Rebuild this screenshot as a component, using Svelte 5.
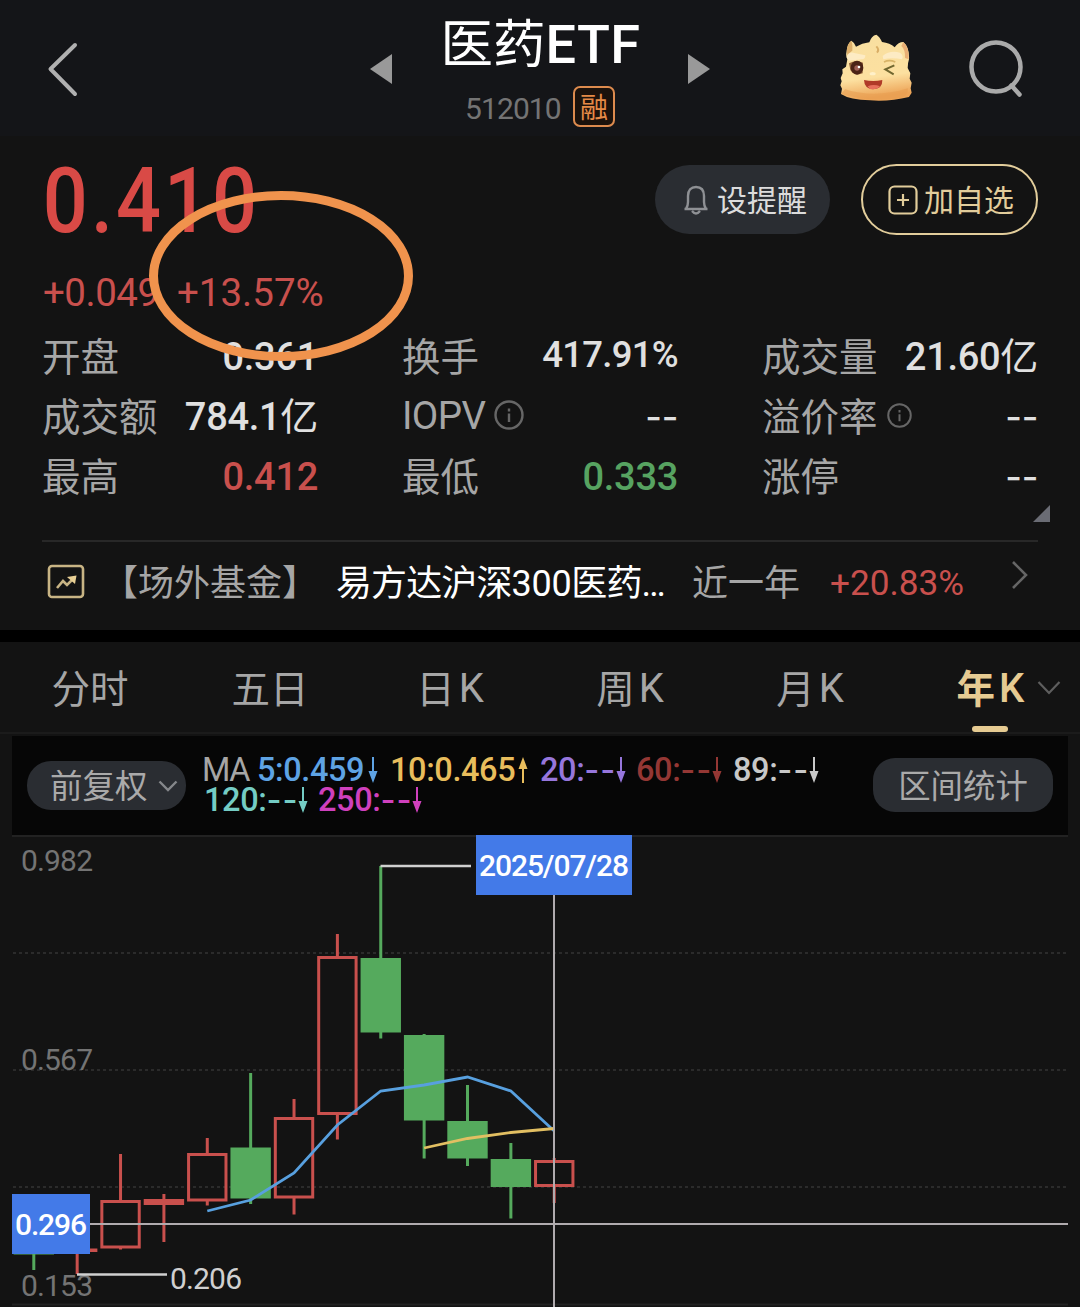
<script lang="ts">
  type Stat = { label: string; value: string; unit?: string; tone?: string; info?: number; percent?: boolean };

  const stats: Stat[] = [
    { label: '开盘', value: '0.361' },
    { label: '换手', value: '417.91%', percent: true },
    { label: '成交量', value: '21.60', unit: '亿' },
    { label: '成交额', value: '784.1', unit: '亿' },
    { label: 'IOPV', value: '--', info: 30 },
    { label: '溢价率', value: '--', info: 25 },
    { label: '最高', value: '0.412', tone: 'up' },
    { label: '最低', value: '0.333', tone: 'down' },
    { label: '涨停', value: '--' },
  ];

  const tabs = [
    { cn: '分时' },
    { cn: '五日' },
    { cn: '日', k: true },
    { cn: '周', k: true },
    { cn: '月', k: true },
    { cn: '年', k: true, active: true },
  ];

  // moving average legend, one list per line
  const averages = [
    [
      { n: '5:', v: '0.459', color: '#5ea3e4', width: 121 },
      { n: '10:', v: '0.465', color: '#e8bd5c', width: 138, rising: true },
      { n: '20:', v: '--', color: '#9676dc', width: 84 },
      { n: '60:', v: '--', color: '#943734', width: 85 },
      { n: '89:', v: '--', color: '#c8c8c8', width: 84 },
    ],
    [
      { n: '120:', v: '--', color: '#74ccc4', width: 102 },
      { n: '250:', v: '--', color: '#cf40bd', width: 103 },
    ],
  ];

  // high, body top, body bottom, low
  const candles = [
    { up: false, y: [1230, 1230, 1254.5, 1270] },
    { up: true, y: [1240, 1248.5, 1252, 1274] },
    { up: true, y: [1154, 1200, 1248.5, 1249.5] },
    { up: true, y: [1194, 1199, 1205, 1242] },
    { up: true, y: [1138, 1153, 1201.5, 1205.5] },
    { up: false, y: [1073, 1147.5, 1198.5, 1204] },
    { up: true, y: [1099, 1117, 1198.5, 1214.5] },
    { up: true, y: [934, 956, 1115, 1139.5] },
    { up: false, y: [866, 958, 1032.5, 1038.5] },
    { up: false, y: [1034, 1035, 1120.5, 1158.5] },
    { up: false, y: [1085, 1121, 1158.5, 1166] },
    { up: false, y: [1143, 1159, 1187, 1218.5] },
    { up: true, y: [1158, 1160, 1187, 1203] },
  ];
  const cx = (i: number) => 33.8 + i * 43.37;
  const line = (start: number, ys: number[]) => ys.map((y, i) => `${cx(start + i)},${y}`).join(' ');

  const ma5 = line(4, [1211, 1200, 1173, 1125, 1091, 1085, 1077, 1091, 1131]);
  const ma10 = line(9, [1148, 1138.5, 1132.5, 1128.5]);

  const axis = [
    { text: '0.982', y: 871 },
    { text: '0.567', y: 1070 },
    { text: '0.153', y: 1296 },
  ];
</script>

<div class="app">
  <header>
    <svg class="back" width="34" height="56" viewBox="0 0 34 56">
      <path d="M30 4 L5.500 28 L30 53" />
    </svg>
    <svg class="arrow" width="22" height="30" viewBox="0 0 22 30"><path d="M0 15 L22 0 V30 Z" /></svg>
    <div class="title">
      <h1>医药<span>ETF</span></h1>
      <div class="code"><span class="num">512010</span><span class="badge">融</span></div>
    </div>
    <svg class="arrow" width="22" height="30" viewBox="0 0 22 30"><path d="M22 15 L0 0 V30 Z" /></svg>
    <svg class="mascot" width="72" height="67" viewBox="0 0 216 201">
      <defs>
        <linearGradient id="face" x1="0" y1="0" x2="0.15" y2="1">
          <stop offset="0" stop-color="#f8dfa0" />
          <stop offset="0.7" stop-color="#fce0a0" />
          <stop offset="1" stop-color="#eda457" />
        </linearGradient>
      </defs>
      <path
        d="M20 52 Q22 28 34 20 Q42 24 48 38 Q66 28 88 25 Q94 5 109 2 Q119 8 126 24 Q150 27 164 40 Q175 24 190 24 Q209 40 207 76 Q203 88 203 102 L211 118 L209 134 L215 146 L212 163 L215 176 L207 189 Q150 203 90 199 Q30 198 3 180 L6 164 L1 154 L5 142 L2 132 L8 118 L7 106 L18 98 L22 76 Q16 66 20 52 Z"
        fill="url(#face)"
      />
      <path d="M20 52 Q22 28 34 20 Q38 28 37 50 Q30 52 24 70 Z" fill="#dcae69" />
      <path d="M190 24 Q208 40 206 76 L195 72 Q196 46 184 36 Z" fill="#e9af75" />
      <path d="M15 166 Q105 194 204 163 Q204 192 170 193 Q80 203 3 180 Z" fill="#e79c50" opacity=".55" />
      <path d="M20 70 Q24 50 46 58 L76 64 Q76 76 66 76 L26 80 Z" fill="#fdebc4" />
      <path d="M128 66 Q150 48 180 56 Q192 64 186 76 Q156 70 130 76 Z" fill="#fdebc4" />
      <path d="M109 37 Q119 47 111 56" stroke="#d9ae66" stroke-width="6" fill="none" />
      <path d="M27 88 Q48 76 69 86 L68 118 Q44 128 31 108 Z" fill="#8f6038" />
      <ellipse cx="51" cy="101" rx="19" ry="21" fill="#4b2316" />
      <circle cx="51" cy="102" r="8" fill="#9f5f54" />
      <circle cx="57" cy="99" r="4" fill="#fff" />
      <path d="M132 84 Q148 76 166 84" stroke="#d9b468" stroke-width="5" fill="none" />
      <path d="M163 94 L136 106 L161 121" stroke="#70662f" stroke-width="6" fill="none" />
      <ellipse cx="98" cy="119" rx="9" ry="5" fill="#fff0c8" />
      <path d="M72 138 Q100 144 127 138 Q128 165 99 166 Q73 164 72 138 Z" fill="#b03a28" />
      <path d="M83 157 Q101 149 120 157 Q110 168 90 165 Z" fill="#e7705c" />
    </svg>
    <svg class="search" width="58" height="60" viewBox="0 0 58 60">
      <circle cx="29" cy="29" r="24.500" />
      <path d="M44.500 47.500 L52.500 56.500" />
    </svg>
  </header>

  <section class="quote">
    <div class="top">
      <div class="price-box">
        <div class="price num">0.410</div>
        <div class="change num"><span>+0.049</span><span>+13.57%</span></div>
      </div>
      <button class="alert">
        <svg width="26" height="30" viewBox="0 0 26 30">
          <path d="M1.500 24 H24.500 M3 24 Q5 21 5 17 V11 C5 5 8 2 13 2 C18 2 21 5 21 11 V17 Q21 21 23 24 M9 26 Q13 31 17 26" />
        </svg>
        <span>设提醒</span>
      </button>
      <button class="add">
        <svg width="30" height="30" viewBox="0 0 30 30">
          <rect x="1.500" y="1.500" width="27" height="27" rx="5" />
          <path d="M15 9 V21 M9 15 H21" />
        </svg>
        <span>加自选</span>
      </button>
      <svg class="circle-mark" width="264" height="170" viewBox="0 0 264 170">
        <ellipse cx="132" cy="85" rx="127.500" ry="80.500" />
      </svg>
    </div>

    <div class="stats">
      {#each stats as s}
        <div class="stat">
          <span class="label" class:latin={s.label === 'IOPV'}>{s.label}</span>
          {#if s.info}
            <svg class="info" width={s.info} height={s.info} viewBox="0 0 30 30">
              <circle cx="15" cy="15" r="13.500" />
              <path d="M15 8.500 V11.500 M15 13.500 V22" />
            </svg>
          {/if}
          <span class="value num {s.tone ?? ''}" class:percent={s.percent} class:empty={s.value === '--'}>{s.value}{#if s.unit}<i>{s.unit}</i>{/if}</span>
        </div>
      {/each}
    </div>
    <svg class="corner" width="17" height="17" viewBox="0 0 17 17"><path d="M17 0 V17 H0 Z" /></svg>

    <div class="fund">
      <svg width="38" height="36" viewBox="0 0 38 36">
        <rect x="2" y="2" width="34" height="31" rx="3" />
        <path d="M10 24 L16 17 L20 21 L27 14" />
        <path class="tip" d="M20 13 L29.500 11.500 L28 20 Z" />
      </svg>
      <span class="kind">【场外基金】</span>
      <span class="name">易方达沪深<b>300</b>医药<b>…</b></span>
      <span class="period">近一年</span>
      <span class="gain num">+20.83%</span>
      <svg class="more" width="18" height="30" viewBox="0 0 18 30"><path d="M2 2 L15 15 L2 28" /></svg>
    </div>
  </section>

  <nav>
    {#each tabs as t}
      <div class="tab" class:active={t.active}>
        {t.cn}{#if t.k}<span class="k">K</span>{/if}
        {#if t.active}
          <svg class="caret" width="24" height="16" viewBox="0 0 24 16"><path d="M1.500 2 L12 13 L22.500 2" /></svg>
        {/if}
      </div>
    {/each}
  </nav>

  <div class="toolbar">
    <button class="adjust">
      <span>前复权</span>
      <svg width="20" height="12" viewBox="0 0 20 12"><path d="M1.500 1.500 L10 10 L18.500 1.500" /></svg>
    </button>
    <div class="legend num">
      {#each averages as row, r}
        <div class="row">
          {#if r === 0}<span class="ma">MA</span>{/if}
          {#each row as a}
            <span class="avg" style="color: {a.color}; width: {a.width}px">
              <span class:none={a.v === '--'}>{a.n}<em>{a.v}</em></span>
              <svg class:rising={a.rising} width="10" height="26" viewBox="0 0 10 26">
                <path d="M4 0 H6 V14 H9.500 L5 26 L0.500 14 H4 Z" />
              </svg>
            </span>
          {/each}
        </div>
      {/each}
    </div>
    <button class="range"><span>区间统计</span></button>
  </div>

  <svg class="chart" width="1080" height="472" viewBox="0 835 1080 472">
    <path class="frame" d="M12 836 H1068 M12 1304.500 H1068" />
    {#each [953, 1070, 1187] as y}
      <line class="grid" x1="13" x2="1067" y1={y} y2={y} />
    {/each}
    {#each axis as a}
      <text class="axis" x="21" y={a.y} textLength="72">{a.text}</text>
    {/each}
    {#each candles as c, i}
      <g class={c.up ? 'rise' : 'fall'}>
        <path d="M{cx(i)} {c.y[0]} V{c.y[1] + 1} M{cx(i)} {c.y[2] - 1} V{c.y[3]}" />
        {#if c.up}
          <rect x={cx(i) - 18.7} y={c.y[1] + 1.5} width="37.400" height={c.y[2] - c.y[1] - 3} />
        {:else}
          <rect x={cx(i) - 20.2} y={c.y[1]} width="40.400" height={c.y[2] - c.y[1]} />
        {/if}
      </g>
    {/each}
    <path class="rise" d="M145 1202 H183" />
    <polyline class="ma5" points={ma5} />
    <polyline class="ma10" points={ma10} />
    <path class="pointer" d="M380.500 866 H471 M77 1274.500 H167" />
    <text class="low" x="170" y="1289" textLength="72">0.206</text>
    <path class="cross" d="M554 895 V1307 M90 1224 H1068" />
    <rect class="tag" x="476" y="835" width="156" height="60" />
    <text class="tag-text" x="479" y="876" textLength="150">2025/07/28</text>
    <rect class="tag" x="12" y="1194" width="78" height="60" />
    <text class="tag-text" x="15" y="1235" textLength="72">0.296</text>
  </svg>
</div>

<style>
  :global(body) {
    background: #131313;
  }
  .app {
    width: 1080px;
    height: 1307px;
    overflow: hidden;
    background: #131313;
    color: #a6a6a6;
    font-family: "Noto Sans CJK SC", sans-serif;
  }
  .num {
    font-family: Roboto, "Noto Sans CJK SC", sans-serif;
  }
  button {
    display: flex;
    align-items: center;
    box-sizing: border-box;
    border: none;
    padding: 0;
    font-family: inherit;
    white-space: nowrap;
  }
  button span {
    margin-bottom: 4px;
  }
  svg {
    display: block;
    flex: none;
    fill: none;
  }

  header {
    display: grid;
    grid-template-columns: 325px 22px 296px 22px 130px 72px 1fr;
    height: 136px;
    padding-left: 45px;
    background: #141518;
  }
  .back {
    margin-top: 41px;
    stroke: #b0b0b0;
    stroke-width: 4;
    stroke-linecap: round;
    stroke-linejoin: round;
  }
  .arrow {
    margin-top: 54px;
    fill: #999;
  }
  .title {
    display: flex;
    flex-direction: column;
    align-items: center;
  }
  h1 {
    margin: 4px 0 0 1px;
    height: 72px;
    line-height: 72px;
    font-size: 52.5px;
    font-weight: 400;
    color: #fff;
  }
  h1 span {
    font-family: Roboto, sans-serif;
    font-size: 54px;
    font-weight: 500;
    letter-spacing: 0.5px;
  }
  .code {
    display: flex;
    align-items: center;
    margin-top: 10px;
    font-size: 30px;
    color: #747474;
  }
  .code .num {
    width: 108px;
    padding-top: 4px;
    letter-spacing: -0.9px;
  }
  .badge {
    box-sizing: border-box;
    width: 42px;
    height: 41px;
    border: 2px solid #dd8b4e;
    border-radius: 7px;
    background: #1b120c;
    color: #e58a47;
    font-size: 28px;
    line-height: 36px;
    text-align: center;
  }
  .mascot {
    grid-column: 6;
    margin-top: 34px;
  }
  .search {
    margin: 38px 0 0 55px;
    stroke: #aaa;
    stroke-width: 4.5;
    stroke-linecap: round;
  }

  .quote {
    box-sizing: border-box;
    height: 506px;
    padding: 0 42px;
    border-bottom: 12px solid #000;
  }
  .top {
    position: relative;
    display: flex;
    height: 190px;
  }
  .price-box {
    width: 613px;
  }
  /* narrowed to get tall, slim digits */
  .price {
    height: 106px;
    padding: 12px 0 0 1px;
    line-height: 106px;
    font-size: 91px;
    font-weight: 500;
    letter-spacing: 3.5px;
    color: #d94a46;
    transform: scaleX(0.87);
    transform-origin: left;
  }
  .change {
    display: flex;
    gap: 18px;
    margin: 16px 0 0 1px;
    font-size: 38.5px;
    line-height: 46px;
    color: #c9504d;
  }
  .change span:first-child {
    width: 116px;
    letter-spacing: -0.5px;
  }
  .alert {
    width: 175px;
    height: 69px;
    margin-top: 29px;
    padding-left: 28px;
    gap: 8px;
    border-radius: 35px;
    background: #2a2d32;
    color: #dcdcdc;
    font-size: 30px;
  }
  .alert svg {
    stroke: #8e9094;
    stroke-width: 2.4;
  }
  .add {
    width: 177px;
    height: 71px;
    margin: 28px 0 0 31px;
    padding-left: 25px;
    gap: 6px;
    border: 2px solid #e2cd9b;
    border-radius: 36px;
    background: none;
    color: #e2cd9b;
    font-size: 30px;
  }
  .add svg {
    stroke: #e2cd9b;
    stroke-width: 2.2;
  }
  /* hand-drawn marker over the percent change */
  .circle-mark {
    position: absolute;
    left: 107px;
    top: 55px;
    z-index: 1;
    stroke: #f0934d;
    stroke-width: 9;
  }

  .stats {
    display: grid;
    grid-template-columns: repeat(3, 276px);
    grid-template-rows: repeat(3, 60px);
    column-gap: 84px;
  }
  .stat {
    display: flex;
    align-items: center;
    height: 60px;
    line-height: 56px;
    font-size: 38.5px;
  }
  .label {
    padding-bottom: 5px;
  }
  .latin {
    padding-bottom: 0;
    font-family: Roboto, sans-serif;
    font-size: 38.5px;
    letter-spacing: -0.6px;
  }
  .info {
    margin: 0 0 2px 9px;
    stroke: #666;
    stroke-width: 2.4;
  }
  .value {
    margin-left: auto;
    padding-top: 1px;
    font-size: 38px;
    font-weight: 500;
    letter-spacing: -0.3px;
    color: #e0e0e0;
  }
  .value i {
    font-style: normal;
    font-weight: 400;
  }
  .percent {
    font-size: 36.5px;
    letter-spacing: -0.7px;
    padding-bottom: 4px;
  }
  .empty {
    font-family: Inter, sans-serif;
    font-size: 36px;
  }
  .up {
    color: #c9504d;
  }
  .down {
    color: #57a361;
  }
  .corner {
    margin: -1px 0 0 991px;
    fill: #6a6c74;
  }

  .fund {
    display: flex;
    align-items: center;
    height: 80px;
    margin-top: 18px;
    border-top: 2px solid #282828;
    padding-left: 5px;
    font-size: 36px;
    white-space: nowrap;
  }
  .fund > span {
    padding-bottom: 4px;
  }
  .fund svg {
    stroke: #c8b484;
    stroke-width: 2.6;
  }
  .fund .tip {
    fill: #e8cf94;
    stroke: none;
  }
  .kind {
    width: 216px;
    margin-left: 17px;
  }
  .name {
    width: 322px;
    margin-left: 18px;
    letter-spacing: -0.9px;
    color: #fff;
  }
  .name b {
    font-family: Roboto, sans-serif;
    font-weight: 400;
    letter-spacing: -0.3px;
  }
  .period {
    width: 108px;
    margin-left: 34px;
  }
  .fund .gain {
    width: 152px;
    margin-left: 30px;
    padding-bottom: 0;
    padding-top: 2px;
    font-size: 35.2px;
    color: #c9504d;
  }
  .fund .more {
    margin: -14px 0 0 29px;
    stroke: #666;
    stroke-width: 2.6;
  }

  nav {
    display: grid;
    grid-template: 90px / repeat(6, 180px);
    border-bottom: 2px solid #1b1b1b;
    margin-bottom: 2px;
  }
  .tab {
    position: relative;
    display: flex;
    justify-content: center;
    line-height: 88px;
    font-size: 38.5px;
  }
  .k {
    margin-left: 4px;
    font-family: Roboto, sans-serif;
    font-size: 40px;
    line-height: 94px;
  }
  .active {
    width: 181px;
    color: #e6cb92;
    font-weight: 700;
  }
  .active .k {
    font-weight: 500;
  }
  .active::after {
    content: "";
    position: absolute;
    left: 72px;
    bottom: 0;
    width: 36px;
    height: 6px;
    border-radius: 3px;
    background: #e6cb92;
  }
  .caret {
    position: absolute;
    left: 137px;
    top: 38px;
    stroke: #5e5e5e;
    stroke-width: 2.2;
  }

  .toolbar {
    display: flex;
    box-sizing: border-box;
    width: 1056px;
    height: 99px;
    margin-left: 12px;
    background: #060606;
  }
  .adjust {
    width: 159px;
    height: 49px;
    margin: 25px 0 0 15px;
    padding-left: 23px;
    gap: 10px;
    border-radius: 24px;
    background: #2a2d32;
    color: #aaa;
    font-size: 32.5px;
  }
  .adjust svg {
    stroke: #85878b;
    stroke-width: 2.4;
  }
  .legend {
    width: 687px;
    padding: 19px 0 0 16px;
    box-sizing: border-box;
    font-size: 32.5px;
    font-weight: 500;
    line-height: 30px;
  }
  .row {
    display: flex;
    gap: 12px;
    height: 30px;
  }
  .row + .row {
    padding-left: 2px;
  }
  .ma {
    width: 43px;
    font-weight: 400;
    letter-spacing: -1.5px;
  }
  .avg {
    display: flex;
    justify-content: space-between;
    white-space: nowrap;
    letter-spacing: -0.4px;
  }
  .avg em {
    font-style: normal;
  }
  .none em {
    font-family: Inter, sans-serif;
    letter-spacing: 1px;
  }
  .avg svg {
    margin-top: 2px;
    fill: currentColor;
  }
  .rising {
    transform: rotate(180deg);
  }
  .range {
    justify-content: center;
    width: 180px;
    height: 54px;
    margin-top: 22px;
    border-radius: 22px;
    background: #2a2d32;
    color: #aaa;
    font-size: 32.4px;
  }

  .chart {
    font-family: Roboto, sans-serif;
    font-size: 30px;
  }
  .frame {
    stroke: #222;
    stroke-width: 2;
  }
  .grid {
    stroke: #353535;
    stroke-width: 1.6;
    stroke-dasharray: 3 3;
  }
  .axis {
    fill: #747474;
  }
  .rise {
    stroke: #c9504d;
    stroke-width: 3;
  }
  .fall {
    stroke: #55aa5d;
    stroke-width: 3;
  }
  .fall rect {
    fill: #55aa5d;
    stroke: none;
  }
  .ma5 {
    stroke: #58a0df;
    stroke-width: 2.8;
  }
  .ma10 {
    stroke: #e2bf62;
    stroke-width: 2.8;
  }
  .pointer {
    stroke: #d0d0d0;
    stroke-width: 2.6;
  }
  .low {
    fill: #d0d0d0;
  }
  .cross {
    stroke: #b0abae;
    stroke-width: 2;
  }
  .tag {
    fill: #437ae8;
  }
  .tag-text {
    fill: #fff;
    font-weight: 500;
  }
</style>
